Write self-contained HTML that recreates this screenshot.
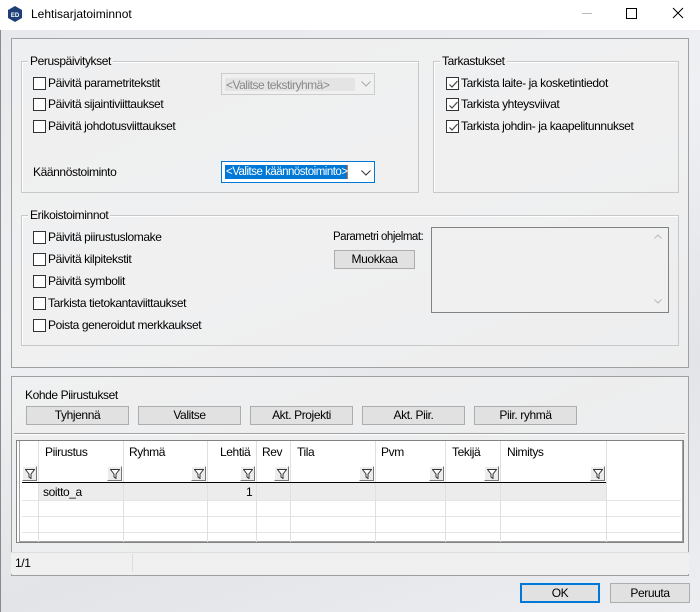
<!DOCTYPE html>
<html><head><meta charset="utf-8"><style>
*{box-sizing:border-box;margin:0;padding:0}
body{width:700px;height:612px;overflow:hidden;font-family:"Liberation Sans",sans-serif;font-size:12px;color:#000;position:relative;background:linear-gradient(160deg,#e6e8ec 0%,#eef0f3 40%,#e2e4e8 70%,#eceef1 100%)}
.a{position:absolute}
.t{position:absolute;white-space:nowrap;letter-spacing:-0.4px;line-height:14px}
.panel{position:absolute;border:1px solid #a0a0a0;background:rgba(240,240,240,0.75)}
.grp{position:absolute;border:1px solid #c8c8c8;box-shadow:inset 1px 1px 0 #fff}
.leg{position:absolute;top:-8px;left:6px;padding:0 2px;background:#f0f0f0;line-height:14px;letter-spacing:-0.4px;white-space:nowrap}
.cb{position:absolute;width:13px;height:13px;border:1px solid #333;background:#fff}
.cb svg{position:absolute;left:1px;top:1px}
.btn{position:absolute;background:#e1e1e1;border:1px solid #adadad;text-align:center;line-height:16px;letter-spacing:-0.4px}
.flt{position:absolute;top:466px;width:15px;height:15px;background:#ececec;border:1px solid #fff;border-right-color:#777;border-bottom-color:#777}
.flt svg{position:absolute;left:2px;top:2px}
.vl{position:absolute;top:0;width:1px;background:#e0e0e0}
</style></head><body>
<div class="a" style="left:0;top:0;width:700px;height:30px;background:#fff"></div>
<div class="a" style="left:0;top:30px;width:1px;height:582px;background:#8a8a8a"></div>
<svg class="a" style="left:8px;top:6px" width="14" height="16"><polygon points="7,0 14,4 14,12 7,16 0,12 0,4" fill="#1e3f78"/><text x="7" y="11" font-size="6" fill="#fff" text-anchor="middle" font-family="Liberation Sans" font-weight="bold">ED</text></svg>
<div class="t" style="left:31px;top:7px;font-size:12px;letter-spacing:0">Lehtisarjatoiminnot</div>
<div class="a" style="left:582px;top:13px;width:10px;height:1px;background:#bbb"></div>
<div class="a" style="left:626px;top:8px;width:11px;height:11px;border:1px solid #000"></div>
<svg class="a" style="left:672px;top:7px" width="12" height="12"><path d="M1 1L11 11M11 1L1 11" stroke="#000" stroke-width="1"/></svg>

<div class="panel" style="left:11px;top:38px;width:678px;height:330px"></div>
<div class="grp" style="left:21px;top:61px;width:398px;height:132px"><div class="leg">Peruspäivitykset</div></div>
<div class="cb" style="left:33px;top:77px"></div><div class="t" style="left:48px;top:76px">Päivitä parametritekstit</div>
<div class="cb" style="left:33px;top:98px"></div><div class="t" style="left:48px;top:97px">Päivitä sijaintiviittaukset</div>
<div class="cb" style="left:33px;top:120px"></div><div class="t" style="left:48px;top:119px">Päivitä johdotusviittaukset</div>
<div class="t" style="left:33px;top:165px">Käännöstoiminto</div>
<div class="a" style="left:221px;top:73px;width:154px;height:22px;border:1px solid #ccc;background:#f0f0f0"></div>
<div class="a" style="left:225px;top:78px;width:130px;height:13px;background:#e4e4e4"></div>
<div class="t" style="left:226px;top:78px;color:#888;letter-spacing:-0.5px">&lt;Valitse tekstiryhmä&gt;</div>
<svg class="a" style="left:361px;top:81px" width="10" height="6"><path d="M0.5 0.5L5 5L9.5 0.5" stroke="#aaa" fill="none"/></svg>
<div class="a" style="left:221px;top:161px;width:154px;height:22px;border:1px solid #0078d7;background:#fff"></div>
<div class="a" style="left:225px;top:165px;width:122px;height:14px;background:#0078d7"></div>
<div class="a" style="left:347px;top:165px;width:1px;height:14px;background:#e07020"></div>
<div class="t" style="left:226px;top:165px;color:#fff;font-size:11.5px;letter-spacing:-0.5px">&lt;Valitse käännöstoiminto&gt;</div>
<svg class="a" style="left:361px;top:170px" width="10" height="6"><path d="M0.5 0.5L5 5L9.5 0.5" stroke="#333" fill="none"/></svg>

<div class="grp" style="left:433px;top:61px;width:246px;height:132px"><div class="leg">Tarkastukset</div></div>
<div class="cb" style="left:446px;top:77px"><svg width="11" height="11"><path d="M1.5 5.5L4 8L9.5 2" stroke="#444" fill="none" stroke-width="1.2"/></svg></div><div class="t" style="left:461px;top:76px">Tarkista laite- ja kosketintiedot</div>
<div class="cb" style="left:446px;top:98px"><svg width="11" height="11"><path d="M1.5 5.5L4 8L9.5 2" stroke="#444" fill="none" stroke-width="1.2"/></svg></div><div class="t" style="left:461px;top:97px">Tarkista yhteysviivat</div>
<div class="cb" style="left:446px;top:120px"><svg width="11" height="11"><path d="M1.5 5.5L4 8L9.5 2" stroke="#444" fill="none" stroke-width="1.2"/></svg></div><div class="t" style="left:461px;top:119px">Tarkista johdin- ja kaapelitunnukset</div>

<div class="grp" style="left:21px;top:215px;width:658px;height:131px"><div class="leg">Erikoistoiminnot</div></div>
<div class="cb" style="left:33px;top:231px"></div><div class="t" style="left:48px;top:230px">Päivitä piirustuslomake</div>
<div class="cb" style="left:33px;top:253px"></div><div class="t" style="left:48px;top:252px">Päivitä kilpitekstit</div>
<div class="cb" style="left:33px;top:275px"></div><div class="t" style="left:48px;top:274px">Päivitä symbolit</div>
<div class="cb" style="left:33px;top:297px"></div><div class="t" style="left:48px;top:296px">Tarkista tietokantaviittaukset</div>
<div class="cb" style="left:33px;top:319px"></div><div class="t" style="left:48px;top:318px">Poista generoidut merkkaukset</div>
<div class="t" style="left:333px;top:230px;font-size:11.5px;letter-spacing:-0.5px">Parametri ohjelmat:</div>
<div class="btn" style="left:334px;top:250px;width:81px;height:19px">Muokkaa</div>
<div class="a" style="left:431px;top:227px;width:238px;height:86px;border:1px solid #828282;background:#f0f0f0"></div>
<svg class="a" style="left:654px;top:234px" width="8" height="5"><path d="M0.5 4.5L4 1L7.5 4.5" stroke="#bbb" fill="none"/></svg>
<svg class="a" style="left:654px;top:299px" width="8" height="5"><path d="M0.5 0.5L4 4L7.5 0.5" stroke="#bbb" fill="none"/></svg>

<div class="panel" style="left:11px;top:376px;width:678px;height:200px"></div>
<div class="t" style="left:25px;top:388px">Kohde Piirustukset</div>
<div class="btn" style="left:26px;top:406px;width:103px;height:19px">Tyhjennä</div>
<div class="btn" style="left:138px;top:406px;width:103px;height:19px">Valitse</div>
<div class="btn" style="left:250px;top:406px;width:103px;height:19px">Akt. Projekti</div>
<div class="btn" style="left:362px;top:406px;width:103px;height:19px">Akt. Piir.</div>
<div class="btn" style="left:474px;top:406px;width:103px;height:19px">Piir. ryhmä</div>
<div class="a" style="left:14px;top:433px;width:671px;height:1px;background:#a0a0a0"></div>
<div class="a" style="left:14px;top:434px;width:671px;height:1px;background:#fff"></div>

<div class="a" style="left:16px;top:440px;width:668px;height:103px;border:1px solid #828282;background:#fff">
 <div class="a" style="left:2px;top:0;width:664px;height:101px;border:1px solid #a0a0a0;border-top:0"></div>
 <div class="a" style="left:22px;top:42px;width:567px;height:17px;background:#ececec"></div>
 <div class="a" style="left:5px;top:59px;width:659px;height:1px;background:#e4e4e4"></div>
 <div class="a" style="left:5px;top:75px;width:659px;height:1px;background:#e4e4e4"></div>
 <div class="a" style="left:5px;top:91px;width:659px;height:1px;background:#e4e4e4"></div>
 <div class="vl" style="left:21px;height:101px"></div>
 <div class="vl" style="left:106px;height:101px"></div>
 <div class="vl" style="left:190px;height:101px"></div>
 <div class="vl" style="left:239px;height:101px"></div>
 <div class="vl" style="left:273px;height:101px"></div>
 <div class="vl" style="left:358px;height:101px"></div>
 <div class="vl" style="left:428px;height:101px"></div>
 <div class="vl" style="left:483px;height:101px"></div>
 <div class="vl" style="left:589px;height:101px"></div>
 <div class="a" style="left:5px;top:41px;width:584px;height:1px;background:#000"></div>
</div>
<div class="flt" style="left:22px"><svg width="10" height="10"><path d="M0.5 0.5H9.5L6 5V9.5L4 8V5Z" fill="#fff" stroke="#333"/></svg></div>
<div class="flt" style="left:107px"><svg width="10" height="10"><path d="M0.5 0.5H9.5L6 5V9.5L4 8V5Z" fill="#fff" stroke="#333"/></svg></div>
<div class="flt" style="left:191px"><svg width="10" height="10"><path d="M0.5 0.5H9.5L6 5V9.5L4 8V5Z" fill="#fff" stroke="#333"/></svg></div>
<div class="flt" style="left:240px"><svg width="10" height="10"><path d="M0.5 0.5H9.5L6 5V9.5L4 8V5Z" fill="#fff" stroke="#333"/></svg></div>
<div class="flt" style="left:274px"><svg width="10" height="10"><path d="M0.5 0.5H9.5L6 5V9.5L4 8V5Z" fill="#fff" stroke="#333"/></svg></div>
<div class="flt" style="left:359px"><svg width="10" height="10"><path d="M0.5 0.5H9.5L6 5V9.5L4 8V5Z" fill="#fff" stroke="#333"/></svg></div>
<div class="flt" style="left:429px"><svg width="10" height="10"><path d="M0.5 0.5H9.5L6 5V9.5L4 8V5Z" fill="#fff" stroke="#333"/></svg></div>
<div class="flt" style="left:484px"><svg width="10" height="10"><path d="M0.5 0.5H9.5L6 5V9.5L4 8V5Z" fill="#fff" stroke="#333"/></svg></div>
<div class="flt" style="left:590px"><svg width="10" height="10"><path d="M0.5 0.5H9.5L6 5V9.5L4 8V5Z" fill="#fff" stroke="#333"/></svg></div>
<div class="t" style="left:45px;top:445px">Piirustus</div>
<div class="t" style="left:129px;top:445px">Ryhmä</div>
<div class="t" style="left:220px;top:445px">Lehtiä</div>
<div class="t" style="left:262px;top:445px">Rev</div>
<div class="t" style="left:297px;top:445px">Tila</div>
<div class="t" style="left:381px;top:445px">Pvm</div>
<div class="t" style="left:452px;top:445px">Tekijä</div>
<div class="t" style="left:507px;top:445px">Nimitys</div>
<div class="t" style="left:43px;top:485px">soitto_a</div>
<div class="t" style="left:246px;top:485px">1</div>

<div class="a" style="left:11px;top:552px;width:678px;height:22px;background:#f0f0f0;border-top:1px solid #ddd"></div>
<div class="a" style="left:132px;top:554px;width:1px;height:18px;background:#ddd"></div>
<div class="t" style="left:15px;top:556px">1/1</div>

<div class="btn" style="left:520px;top:583px;width:80px;height:20px;border:2px solid #0078d7;line-height:16px">OK</div>
<div class="btn" style="left:610px;top:583px;width:80px;height:20px;line-height:18px">Peruuta</div>
</body></html>
